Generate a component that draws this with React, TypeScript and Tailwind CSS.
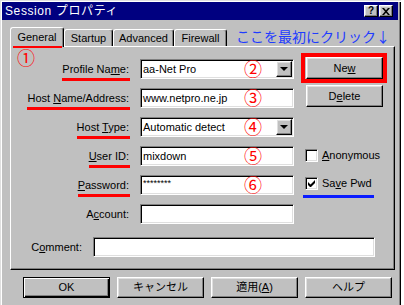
import * as React from 'react';

const raised =
  'border border-t-white border-l-white border-r-black border-b-black shadow-[inset_-1px_-1px_0_#808080,inset_1px_1px_0_#dfdfdf]';
const sunken =
  'border border-t-[#808080] border-l-[#808080] border-r-white border-b-white shadow-[inset_1px_1px_0_#000,inset_-1px_-1px_0_#dfdfdf]';

function Label({ children, mark }: { children: React.ReactNode; mark?: boolean }) {
  return (
    <div className="flex h-[20px] justify-end">
      <span className="relative leading-[20px] whitespace-nowrap">
        {children}
        {mark && <span className="absolute left-0 -right-[1px] top-[19px] h-[3px] bg-[#ff0000]" />}
      </span>
    </div>
  );
}

function Field({
  value,
  num,
  combo,
  small,
  className = '',
}: {
  value?: string;
  num?: string;
  combo?: boolean;
  small?: boolean;
  className?: string;
}) {
  return (
    <div className={`relative h-[20px] bg-white flex items-center ${sunken} ${className}`}>
      {value && (
        <span className={small ? 'pl-[2px] text-[9px] leading-[9px] self-start mt-[3px]' : 'pl-[2px] leading-[16px]'}>
          {value}
        </span>
      )}
      {num && (
        <span className="absolute left-[103px] -top-[2px] font-['Noto_Sans_CJK_JP',sans-serif] text-[18px] leading-[20px] text-[#ff0000]">
          {num}
        </span>
      )}
      {combo && (
        <div className={`absolute right-[1px] top-[1px] w-[16px] h-[16px] bg-[#c0c0c0] flex items-center justify-center ${raised}`}>
          <div className="w-0 h-0 border-l-[4px] border-r-[4px] border-t-[4px] border-l-transparent border-r-transparent border-t-black" />
        </div>
      )}
    </div>
  );
}

function Button({ children, className = '' }: { children: React.ReactNode; className?: string }) {
  return (
    <div className={`bg-[#c0c0c0] flex items-center justify-center ${raised} ${className}`}>{children}</div>
  );
}

function Check({ checked }: { checked?: boolean }) {
  return (
    <div className={`w-[13px] h-[13px] bg-white flex items-center justify-center ${sunken}`}>
      {checked && (
        <svg width="7" height="7" viewBox="0 0 7 7">
          <path d="M0 2v3l2 2h1l4-4V0L2.5 4.5z" fill="#000" />
        </svg>
      )}
    </div>
  );
}

export default function App() {
  return (
    <div className="w-[404px] h-[305px] bg-white overflow-hidden font-['Liberation_Sans','Noto_Sans_CJK_JP',sans-serif] text-[11px] text-black">
      <div className="w-[401px] h-[305px] bg-[#c0c0c0] pt-[2px] pl-[2px] shadow-[inset_1px_1px_0_#dfdfdf,inset_2px_2px_0_#fff,inset_-1px_0_0_#000,inset_-2px_0_0_#808080]">
        {/* title bar */}
        <div className="w-[396px] h-[18px] bg-[#000080] flex items-center pl-[3px] pr-[5px]">
          <span className="text-white text-[12px] leading-[14px] tracking-[0.6px]">Session プロパティ</span>
          <div className="ml-auto flex gap-[1px]">
            <Button className="w-[14px] h-[12px]">
              <span className="font-bold text-[10px] leading-[10px]">?</span>
            </Button>
            <Button className="w-[14px] h-[12px]">
              <svg width="8" height="7" viewBox="0 0 8 7">
                <path d="M0 0h2l2 2.2L6 0h2L5 3.5 8 7H6L4 4.8 2 7H0l3-3.5z" fill="#000" />
              </svg>
            </Button>
          </div>
        </div>

        {/* tabs */}
        <div className="mt-[7px] ml-[8px] h-[19px] flex items-end">
          <div className="relative z-10 -mb-[1px] w-[54px] h-[20px] bg-[#c0c0c0] border-t border-l border-t-white border-l-white border-r border-r-black rounded-t-[3px] shadow-[inset_-1px_0_0_#808080] flex justify-center pt-[2px]">
            <span className="leading-[14px]">General</span>
            <span className="absolute left-[2px] w-[49px] top-[18px] h-[2px] bg-[#ff0000]" />
          </div>
          {[
            ['Startup', 'w-[49px]'],
            ['Advanced', 'w-[61px]'],
            ['Firewall', 'w-[53px]'],
          ].map(([t, w]) => (
            <div
              key={t}
              className={`${w} h-[17px] border-t border-l border-t-white border-l-white border-r border-r-black rounded-t-[3px] shadow-[inset_-1px_0_0_#808080] flex justify-center pt-[1px]`}
            >
              <span className="leading-[14px]">{t}</span>
            </div>
          ))}
          <span className="self-start mt-[1px] ml-[9px] font-['Noto_Sans_CJK_JP',sans-serif] text-[14px] leading-[17px] text-[#1f3cff] whitespace-nowrap">
            ここを最初にクリック↓
          </span>
        </div>

        {/* panel */}
        <div className="relative ml-[8px] w-[385px] h-[224px] border-l border-t border-l-white border-t-white border-r border-b border-r-black border-b-black shadow-[inset_-1px_-1px_0_#808080]">
          <span className="absolute left-[6px] top-[0px] font-['Noto_Sans_CJK_JP',sans-serif] text-[18px] leading-[20px] text-[#ff0000]">
            ①
          </span>
          <div className="flex items-start">
            <div className="mt-[12px] grid grid-cols-[118px_154px] gap-x-[11px] gap-y-[9px]">
              <Label mark>
                Profile Na<u>m</u>e:
              </Label>
              <Field value="aa-Net Pro" num="②" combo />
              <Label mark>
                Host <u>N</u>ame/Address:
              </Label>
              <Field value="www.netpro.ne.jp" num="③" />
              <Label mark>
                Host <u>T</u>ype:
              </Label>
              <Field value="Automatic detect" num="④" combo />
              <Label mark>
                <u>U</u>ser ID:
              </Label>
              <Field value="mixdown" num="⑤" />
              <Label mark>
                <u>P</u>assword:
              </Label>
              <Field value="********" num="⑥" small />
              <Label>
                A<u>c</u>count:
              </Label>
              <Field />
            </div>

            <div className="ml-[7px] mt-[6px] flex flex-col">
              <div className="w-[86px] h-[30px] border-[4px] border-[#ff0000] pl-[1px]">
                <Button className="w-[77px] h-[22px]">
                  <span>
                    Ne<u>w</u>
                  </span>
                </Button>
              </div>
              <Button className="ml-[5px] mt-[2px] w-[77px] h-[22px]">
                <span>
                  D<u>e</u>lete
                </span>
              </Button>
              <div className="ml-[4px] mt-[42px] flex items-center gap-[4px]">
                <Check />
                <span className="leading-[13px]">
                  <u>A</u>nonymous
                </span>
              </div>
              <div className="relative ml-[4px] mt-[15px] flex items-center gap-[4px]">
                <Check checked />
                <span className="leading-[13px]">
                  Sa<u>v</u>e Pwd
                </span>
                <span className="absolute -left-[2px] w-[71px] top-[18px] h-[3px] bg-[#0a1cff]" />
              </div>
            </div>
          </div>

          <div className="mt-[13px] flex items-center">
            <div className="w-[71px] flex justify-end">
              <span className="leading-[20px]">
                C<u>o</u>mment:
              </span>
            </div>
            <Field className="ml-[11px] w-[282px]" />
          </div>
        </div>

        {/* bottom buttons */}
        <div className="mt-[7px] pl-[21px] flex gap-[7px]">
          <div className="w-[87px] h-[21px] bg-[#c0c0c0] border border-black shadow-[inset_1px_1px_0_#fff,inset_-1px_-1px_0_#000,inset_-2px_-2px_0_#808080] flex items-center justify-center">
            OK
          </div>
          <Button className="w-[87px] h-[21px]">キャンセル</Button>
          <Button className="w-[87px] h-[21px]">
            <span>
              適用(<u>A</u>)
            </span>
          </Button>
          <Button className="w-[87px] h-[21px]">ヘルプ</Button>
        </div>
      </div>
    </div>
  );
}
